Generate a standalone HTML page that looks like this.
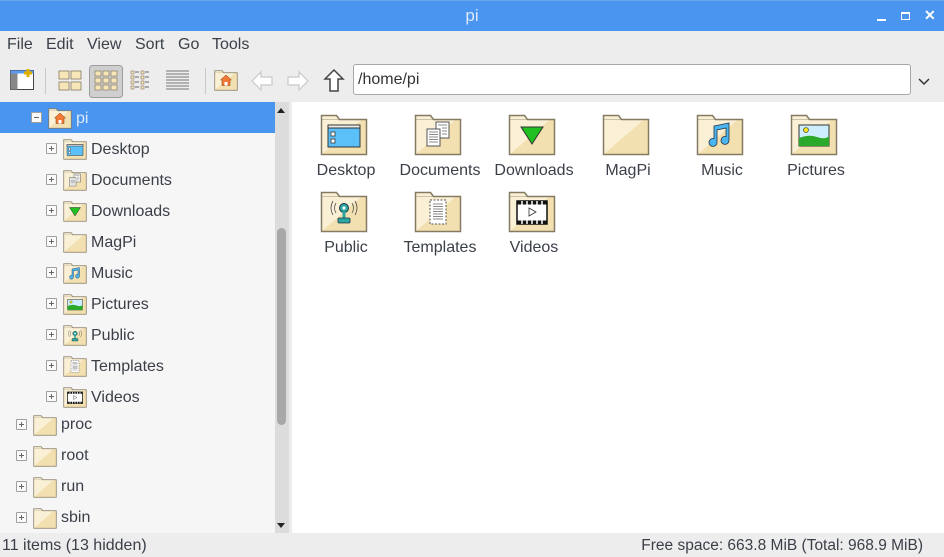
<!DOCTYPE html>
<html><head><meta charset="utf-8"><style>
*{margin:0;padding:0;box-sizing:border-box}
body{width:944px;height:557px;overflow:hidden;background:#ededed;font-family:"Liberation Sans",sans-serif;color:#3a3f48;position:relative}
.a{position:absolute}
.t{font-size:16px;white-space:nowrap}
.exp{position:absolute;width:11px;height:11px;border:1px solid #a0a0a0;background:#fafafa;border-radius:1px}
.exp:before{content:"";position:absolute;left:2px;top:4px;width:5px;height:1px;background:#666}
.exp.p:after{content:"";position:absolute;left:4px;top:2px;width:1px;height:5px;background:#666}
.lbl{position:absolute;width:94px;text-align:center;font-size:16px;color:#3a3f48}
</style></head><body>
<svg width="0" height="0" style="position:absolute">
<defs>
<linearGradient id="g" x1="0" y1="0" x2="1" y2="1"><stop offset="0.5" stop-color="#faf0d6"/><stop offset="0.5" stop-color="#f3e0b0"/></linearGradient>
<symbol id="f" viewBox="0 0 48 44"><path d="M1.5 3.5h15l3 4h27v35h-45z" fill="url(#g)" stroke="#857a62" stroke-width="1.5"/><path d="M1.5 7.5h45" stroke="#857a62" stroke-width="1" opacity=".4"/></symbol>
<symbol id="desk" viewBox="0 0 48 44"><use href="#f"/><rect x="8" y="13" width="32" height="22" fill="#5bc0f8" stroke="#333"/><rect x="8" y="13" width="32" height="3" fill="#eee" stroke="#333"/><rect x="11" y="20" width="4" height="4" fill="#fff" stroke="#333" stroke-width=".8"/><rect x="11" y="27" width="4" height="4" fill="#fff" stroke="#333" stroke-width=".8"/></symbol>
<symbol id="docs" viewBox="0 0 48 44"><use href="#f"/><rect x="22" y="10" width="13" height="16" fill="#fff" stroke="#555"/><rect x="13" y="17" width="13" height="17" fill="#fff" stroke="#555"/><path d="M15 20h9M15 22.5h9M15 25h9M15 27.5h9M15 30h9M24 13h9M28 16h5M28 19h5M28 22h5" stroke="#666" stroke-width=".8"/></symbol>
<symbol id="down" viewBox="0 0 48 44"><use href="#f"/><path d="M13 15h22L24 32z" fill="#1fc01f" stroke="#333"/></symbol>
<symbol id="music" viewBox="0 0 48 44"><use href="#f"/><path d="M18 14l15-3v17a4 4 0 1 1-3-3.5V16l-9 2v12a4 4 0 1 1-3-3.5z" fill="#4ab5f0" stroke="#234" stroke-width=".8"/></symbol>
<symbol id="pics" viewBox="0 0 48 44"><use href="#f"/><rect x="9" y="13" width="30" height="21" fill="#cdeefe" stroke="#333"/><path d="M9 26q10-4 18-1t12-1v10H9z" fill="#2aa92a"/><circle cx="16" cy="18" r="2.5" fill="#f3e21a" stroke="#333" stroke-width=".6"/></symbol>
<symbol id="pub" viewBox="0 0 48 44"><use href="#f"/><circle cx="24" cy="19" r="4.5" fill="#2aa7a0" stroke="#234"/><circle cx="24" cy="19" r="1.6" fill="#fff"/><rect x="22.5" y="23" width="3" height="6" fill="#2aa7a0"/><rect x="18" y="29" width="12" height="5" rx="1" fill="#2aa7a0" stroke="#234" stroke-width=".8"/><path d="M16 14q-3 5 0 10M13 12q-4 7 0 14M32 14q3 5 0 10M35 12q4 7 0 14" stroke="#555" fill="none" stroke-width=".8"/></symbol>
<symbol id="tmpl" viewBox="0 0 48 44"><use href="#f"/><rect x="16" y="11" width="16" height="24" fill="#fff" stroke="#555" stroke-dasharray="2 1.5"/><path d="M19 15h10M19 17.5h10M19 20h10M19 22.5h10M19 25h10M19 27.5h10M19 30h10" stroke="#666" stroke-width=".8"/></symbol>
<symbol id="vid" viewBox="0 0 48 44"><use href="#f"/><rect x="9" y="12" width="30" height="23" fill="#fff" stroke="#111" stroke-width="1.5"/><path d="M9 12h30v3.5H9zM9 31.5h30V35H9z" fill="#111"/><path d="M14 12v4M19 12v4M24 12v4M29 12v4M34 12v4M14 31v4M19 31v4M24 31v4M29 31v4M34 31v4" stroke="#fff" stroke-width="1.5"/><path d="M21 19l7 4-7 4z" fill="#fff" stroke="#333" stroke-width=".8"/></symbol>
<symbol id="home" viewBox="0 0 48 44"><use href="#f"/><path d="M24 12l11 10h-3v11H16V22h-3z" fill="#f07a35" stroke="#8a3a10"/><path d="M21 33v-7h6v7" fill="#fff"/></symbol>
</defs></svg>

<div class="a" style="left:0;top:0;width:944px;height:31px;background:#4a95ef;border-top:1px solid #6aa8f0"></div>
<div class="a t" style="left:0;top:6px;width:944px;text-align:center;color:#dce9fb;font-size:17px">pi</div>
<div class="a" style="left:877px;top:19px;width:9px;height:2px;background:#fff"></div>
<div class="a" style="left:901px;top:12px;width:9px;height:8px;border:1.5px solid #fff;border-top-width:2.5px"></div>
<div class="a t" style="left:924px;top:7px;color:#fff;font-size:14px;font-weight:bold">✕</div>

<div class="a t" style="left:7px;top:36px">File</div>
<div class="a t" style="left:46px;top:36px">Edit</div>
<div class="a t" style="left:87px;top:36px">View</div>
<div class="a t" style="left:135px;top:36px">Sort</div>
<div class="a t" style="left:178px;top:36px">Go</div>
<div class="a t" style="left:212px;top:36px">Tools</div>

<svg class="a" style="left:0;top:62px" width="944" height="38">
<rect x="10.5" y="8.5" width="23" height="19" fill="#fff" stroke="#444"/><rect x="10.5" y="8.5" width="23" height="3" fill="#5b9af0"/><rect x="10.5" y="11.5" width="7" height="16" fill="#888"/><path d="M28 7v8M24 11h8" stroke="#e0b000" stroke-width="3"/>
<path d="M45.5 6v26M205.5 6v26" stroke="#c8c8c8"/>
<g fill="#f7e6b8" stroke="#857a62" stroke-width=".8"><rect x="59" y="9" width="10" height="8"/><rect x="71" y="9" width="10" height="8"/><rect x="59" y="20" width="10" height="8"/><rect x="71" y="20" width="10" height="8"/></g>
<rect x="89.5" y="3.5" width="33" height="32" rx="3" fill="#cfcfcf" stroke="#9c9c9c"/>
<g fill="#f7e6b8" stroke="#857a62" stroke-width=".7"><rect x="95" y="9" width="6" height="5"/><rect x="103" y="9" width="6" height="5"/><rect x="111" y="9" width="6" height="5"/><rect x="95" y="16" width="6" height="5"/><rect x="103" y="16" width="6" height="5"/><rect x="111" y="16" width="6" height="5"/><rect x="95" y="23" width="6" height="5"/><rect x="103" y="23" width="6" height="5"/><rect x="111" y="23" width="6" height="5"/></g>
<g stroke="#666" stroke-width="1"><path d="M135 10h4M135 15h4M135 20h4M135 25h4M145 10h4M145 15h4M145 20h4M145 25h4"/><path d="M166 9h23M166 12h23M166 15h23M166 18h23M166 21h23M166 24h23M166 27h23" stroke="#777"/></g>
<g fill="#f7e6b8" stroke="#857a62" stroke-width=".6"><rect x="131" y="9" width="3" height="3"/><rect x="131" y="14" width="3" height="3"/><rect x="131" y="19" width="3" height="3"/><rect x="131" y="24" width="3" height="3"/><rect x="141" y="9" width="3" height="3"/><rect x="141" y="14" width="3" height="3"/><rect x="141" y="19" width="3" height="3"/><rect x="141" y="24" width="3" height="3"/></g>
<use href="#home" x="214" y="7" width="24" height="22"/>
<path d="M252 19l9-9v5h11v8h-11v5z" fill="#fff" stroke="#d0d0d0" stroke-width="1.5"/>
<path d="M308 19l-9-9v5h-11v8h11v5z" fill="#fff" stroke="#d0d0d0" stroke-width="1.5"/>
<path d="M334 8l-9 9h5v12h8V17h5z" fill="#fff" stroke="#444" stroke-width="1.5"/>
<path d="M919 17l5 5 5-5" stroke="#333" fill="none" stroke-width="1.5"/>
</svg>
<div class="a" style="left:353px;top:64px;width:558px;height:31px;background:#fff;border:1px solid #a8a8a8;border-radius:3px"></div>
<div class="a t" style="left:358px;top:71px;color:#333">/home/pi</div>

<div class="a" style="left:0;top:102px;width:275px;height:431px;background:#f6f6f6"></div>
<div class="a" style="left:0;top:102px;width:275px;height:31px;background:#4a95ef"></div>
<div class="a" style="left:275px;top:102px;width:14px;height:431px;background:#dcdcdc"></div>
<div class="a" style="left:277px;top:228px;width:9px;height:197px;background:#a8a8a8;border-radius:5px"></div>
<div class="a" style="left:277px;top:104px;border:4px solid transparent;border-bottom:5px solid #222;width:0;height:0"></div>
<div class="a" style="left:277px;top:523px;border:4px solid transparent;border-top:5px solid #222;width:0;height:0"></div>
<div class="a" style="left:289px;top:102px;width:3px;height:431px;background:#ececec"></div>

<div class="exp" style="left:31px;top:112px"></div>
<svg class="a" style="left:48px;top:107px" width="24" height="22"><use href="#home" width="24" height="22"/></svg>
<div class="a t" style="left:76px;top:110px;color:#dce9fb">pi</div>

<div class="exp p" style="left:46px;top:143px"></div><svg class="a" style="left:63px;top:138px" width="24" height="22"><use href="#desk" width="24" height="22"/></svg><div class="a t" style="left:91px;top:141px">Desktop</div>
<div class="exp p" style="left:46px;top:174px"></div><svg class="a" style="left:63px;top:169px" width="24" height="22"><use href="#docs" width="24" height="22"/></svg><div class="a t" style="left:91px;top:172px">Documents</div>
<div class="exp p" style="left:46px;top:205px"></div><svg class="a" style="left:63px;top:200px" width="24" height="22"><use href="#down" width="24" height="22"/></svg><div class="a t" style="left:91px;top:203px">Downloads</div>
<div class="exp p" style="left:46px;top:236px"></div><svg class="a" style="left:63px;top:231px" width="24" height="22"><use href="#f" width="24" height="22"/></svg><div class="a t" style="left:91px;top:234px">MagPi</div>
<div class="exp p" style="left:46px;top:267px"></div><svg class="a" style="left:63px;top:262px" width="24" height="22"><use href="#music" width="24" height="22"/></svg><div class="a t" style="left:91px;top:265px">Music</div>
<div class="exp p" style="left:46px;top:298px"></div><svg class="a" style="left:63px;top:293px" width="24" height="22"><use href="#pics" width="24" height="22"/></svg><div class="a t" style="left:91px;top:296px">Pictures</div>
<div class="exp p" style="left:46px;top:329px"></div><svg class="a" style="left:63px;top:324px" width="24" height="22"><use href="#pub" width="24" height="22"/></svg><div class="a t" style="left:91px;top:327px">Public</div>
<div class="exp p" style="left:46px;top:360px"></div><svg class="a" style="left:63px;top:355px" width="24" height="22"><use href="#tmpl" width="24" height="22"/></svg><div class="a t" style="left:91px;top:358px">Templates</div>
<div class="exp p" style="left:46px;top:391px"></div><svg class="a" style="left:63px;top:386px" width="24" height="22"><use href="#vid" width="24" height="22"/></svg><div class="a t" style="left:91px;top:389px">Videos</div>

<div class="exp p" style="left:16px;top:419px"></div><svg class="a" style="left:33px;top:414px" width="24" height="22"><use href="#f" width="24" height="22"/></svg><div class="a t" style="left:61px;top:416px">proc</div>
<div class="exp p" style="left:16px;top:450px"></div><svg class="a" style="left:33px;top:445px" width="24" height="22"><use href="#f" width="24" height="22"/></svg><div class="a t" style="left:61px;top:447px">root</div>
<div class="exp p" style="left:16px;top:481px"></div><svg class="a" style="left:33px;top:476px" width="24" height="22"><use href="#f" width="24" height="22"/></svg><div class="a t" style="left:61px;top:478px">run</div>
<div class="exp p" style="left:16px;top:512px"></div><svg class="a" style="left:33px;top:507px" width="24" height="22"><use href="#f" width="24" height="22"/></svg><div class="a t" style="left:61px;top:509px">sbin</div>

<div class="a" style="left:292px;top:102px;width:652px;height:431px;background:#fff"></div>
<svg class="a" style="left:320px;top:112px" width="48" height="44"><use href="#desk"/></svg><div class="lbl" style="left:299px;top:162px">Desktop</div>
<svg class="a" style="left:414px;top:112px" width="48" height="44"><use href="#docs"/></svg><div class="lbl" style="left:393px;top:162px">Documents</div>
<svg class="a" style="left:508px;top:112px" width="48" height="44"><use href="#down"/></svg><div class="lbl" style="left:487px;top:162px">Downloads</div>
<svg class="a" style="left:602px;top:112px" width="48" height="44"><use href="#f"/></svg><div class="lbl" style="left:581px;top:162px">MagPi</div>
<svg class="a" style="left:696px;top:112px" width="48" height="44"><use href="#music"/></svg><div class="lbl" style="left:675px;top:162px">Music</div>
<svg class="a" style="left:790px;top:112px" width="48" height="44"><use href="#pics"/></svg><div class="lbl" style="left:769px;top:162px">Pictures</div>
<svg class="a" style="left:320px;top:189px" width="48" height="44"><use href="#pub"/></svg><div class="lbl" style="left:299px;top:239px">Public</div>
<svg class="a" style="left:414px;top:189px" width="48" height="44"><use href="#tmpl"/></svg><div class="lbl" style="left:393px;top:239px">Templates</div>
<svg class="a" style="left:508px;top:189px" width="48" height="44"><use href="#vid"/></svg><div class="lbl" style="left:487px;top:239px">Videos</div>

<div class="a t" style="left:2px;top:537px">11 items (13 hidden)</div>
<div class="a t" style="right:21px;top:537px;font-size:15.5px">Free space: 663.8 MiB (Total: 968.9 MiB)</div>
</body></html>
